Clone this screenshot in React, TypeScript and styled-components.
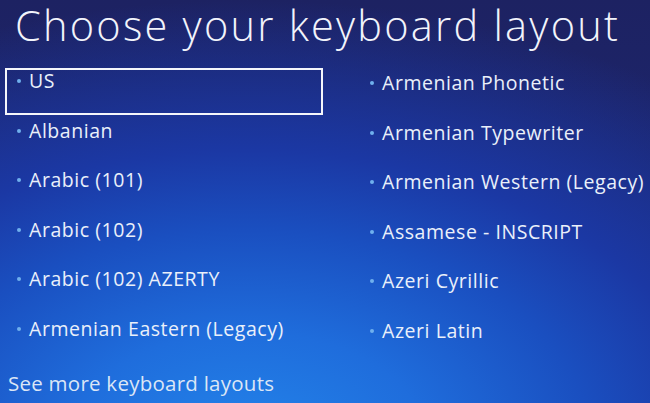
import React from "react";
import styled, { createGlobalStyle } from "styled-components";

const Global = createGlobalStyle`
  html, body { margin: 0; padding: 0; }
  body { width: 650px; height: 403px; overflow: hidden; background: #1b2468; }
`;

const Screen = styled.div`
  width: 650px;
  height: 403px;
  box-sizing: border-box;
  overflow: hidden;
  font-family: "Open Sans", "Noto Sans", sans-serif;
  color: #eef3fb;
  background-color: #1b2266;
  background-image:
    radial-gradient(ellipse 110% 110% at 38% 110%, #2384ea 0%, #1f6ddc 25%, #1a4fc0 48%, #1b38a4 66%, rgba(28, 36, 110, 0) 100%),
    linear-gradient(180deg, #1d2262 0%, #1c2a7c 100%);
  display: flex;
  flex-direction: column;
`;

const Title = styled.h1`
  margin: 0;
  padding: 3px 0 0 15px;
  height: 57px;
  font-size: 41.5px;
  font-weight: 300;
  line-height: 44px;
  letter-spacing: 2.25px;
  color: #f2f4fb;
  white-space: nowrap;
`;

const Grid = styled.div`
  display: grid;
  grid-template-columns: 318px 1fr;
  grid-auto-flow: column;
  grid-template-rows: repeat(6, 47px);
  column-gap: 34px;
  row-gap: 2.6px;
  padding: 8px 0 0 5px;
`;

const Item = styled.div<{ $selected?: boolean; $right?: boolean }>`
  box-sizing: border-box;
  border: 2px solid ${(p) => (p.$selected ? "#f4f6fb" : "transparent")};
  padding: ${(p) => (p.$right ? "2px 0 0 10px" : "0 0 0 9px")};
  display: flex;
  align-items: flex-start;
  font-size: 19.5px;
  line-height: 21px;
  letter-spacing: 0.55px;
  color: #eaf0fa;
  white-space: nowrap;
`;

const Bullet = styled.span`
  width: 4px;
  height: 4px;
  border-radius: 50%;
  background: #6fb0ee;
  margin: 9px 8px 0 1px;
  flex: none;
`;

const Label = styled.span``;

const More = styled.div`
  margin-top: auto;
  padding: 0 0 8px 8px;
  font-size: 20.5px;
  line-height: 24px;
  letter-spacing: 0.25px;
  color: #dbe6f6;
`;

const left = ["US", "Albanian", "Arabic (101)", "Arabic (102)", "Arabic (102) AZERTY", "Armenian Eastern (Legacy)"];
const right = [
  "Armenian Phonetic",
  "Armenian Typewriter",
  "Armenian Western (Legacy)",
  "Assamese - INSCRIPT",
  "Azeri Cyrillic",
  "Azeri Latin",
];

export default function App() {
  return (
    <>
      <Global />
      <Screen>
        <Title>Choose your keyboard layout</Title>
        <Grid>
          {[...left, ...right].map((name, i) => (
            <Item key={name} $selected={i === 0} $right={i >= left.length}>
              <Bullet />
              <Label>{name}</Label>
            </Item>
          ))}
        </Grid>
        <More>See more keyboard layouts</More>
      </Screen>
    </>
  );
}
